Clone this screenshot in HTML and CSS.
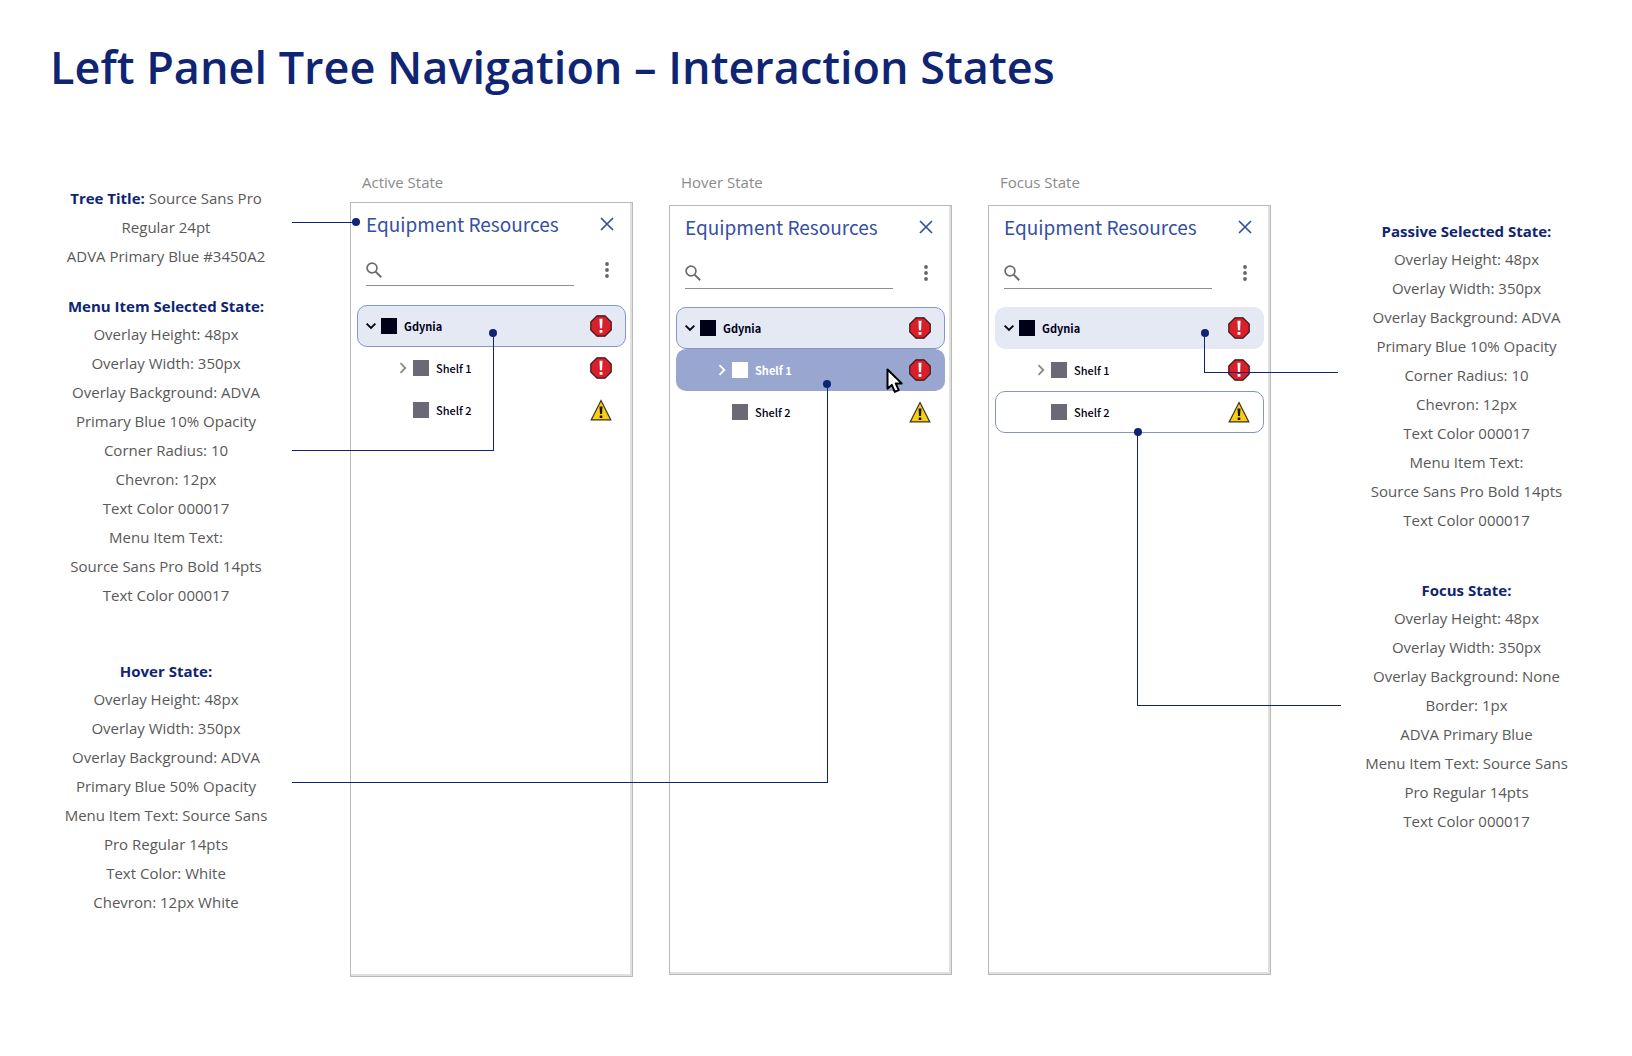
FILE: index.html
```html
<!DOCTYPE html>
<html lang="en">
<head>
<meta charset="utf-8">
<title>Left Panel Tree Navigation – Interaction States</title>
<link rel="stylesheet" href="styles.css">
</head>
<body>
<svg class="symbols" aria-hidden="true">
  <symbol id="close" viewBox="0 0 14 14"><path d="M1 1l12 12M13 1L1 13" fill="none" stroke="currentColor" stroke-width="1.7"/></symbol>
  <symbol id="search" viewBox="0 0 16 16"><circle cx="6" cy="6" r="4.9" fill="none" stroke="currentColor" stroke-width="1.7"/><path d="M9.6 9.6l5.6 5.6" stroke="currentColor" stroke-width="2"/></symbol>
  <symbol id="more" viewBox="0 0 4 16"><g fill="currentColor"><circle cx="2" cy="2" r="1.9"/><circle cx="2" cy="8" r="1.9"/><circle cx="2" cy="14" r="1.9"/></g></symbol>
  <symbol id="down" viewBox="0 0 10 12"><path d="M.6 3.600L5 8l4.400-4.400" fill="none" stroke="currentColor" stroke-width="1.9"/></symbol>
  <symbol id="right" viewBox="0 0 10 12"><path d="M2.500 1.200L7.300 6l-4.800 4.800" fill="none" stroke="currentColor" stroke-width="1.800"/></symbol>
  <symbol id="critical" viewBox="0 0 22 22"><path d="M7 .8h8L21.200 7v8L15 21.200H7L.8 15V7z" fill="#d9202a" stroke="#3a1518" stroke-width="1.200"/><path d="M9.500 3.800h3l-.4 9.400H9.900zM9.600 15h2.800v2.800H9.600z" fill="#fff"/></symbol>
  <symbol id="warning" viewBox="0 0 22 22"><path d="M11 1.500L20.800 20.900H1.200z" fill="#f8cd14" stroke="#39351f" stroke-width="1.200"/><path d="M9.500 7.500h3l-.5 7.500h-2zM9.700 16.500h2.600V19H9.700z" fill="#151515"/></symbol>
</svg>

<h1 class="title">Left Panel Tree Navigation – Interaction States</h1>

<main class="board">
  <div class="notes notes-left">
    <section class="note">
      <p><strong>Tree Title:</strong> Source Sans Pro</p>
      <p>Regular 24pt</p>
      <p>ADVA Primary Blue #3450A2</p>
    </section>
    <section class="note">
      <h2>Menu Item Selected State:</h2>
      <p>Overlay Height: 48px</p>
      <p>Overlay Width: 350px</p>
      <p>Overlay Background: ADVA</p>
      <p>Primary Blue 10% Opacity</p>
      <p>Corner Radius: 10</p>
      <p>Chevron: 12px</p>
      <p>Text Color 000017</p>
      <p>Menu Item Text:</p>
      <p>Source Sans Pro Bold 14pts</p>
      <p>Text Color 000017</p>
    </section>
    <section class="note note-spaced">
      <h2>Hover State:</h2>
      <p>Overlay Height: 48px</p>
      <p>Overlay Width: 350px</p>
      <p>Overlay Background: ADVA</p>
      <p>Primary Blue 50% Opacity</p>
      <p>Menu Item Text: Source Sans</p>
      <p>Pro Regular 14pts</p>
      <p>Text Color: White</p>
      <p>Chevron: 12px White</p>
    </section>
  </div>

  <div class="states">
    <section class="state">
      <h2 class="state-name">Active State</h2>
      <div class="panel panel-active">
        <header class="panel-head">
          <h3>Equipment Resources</h3>
          <button class="icon-button close" aria-label="Close"><svg width="14" height="14"><use href="#close"/></svg></button>
        </header>
        <div class="tools">
          <label class="search"><svg width="16" height="16"><use href="#search"/></svg><input type="search" aria-label="Search resources"></label>
          <button class="icon-button more" aria-label="More options"><svg width="4" height="16"><use href="#more"/></svg></button>
        </div>
        <ul class="tree">
          <li><button class="item root selected outlined"><svg class="chevron" width="10" height="12"><use href="#down"/></svg><span class="node"></span><span class="name">Gdynia</span><svg width="22" height="22"><use href="#critical"/></svg></button></li>
          <li><button class="item child"><svg class="chevron" width="10" height="12"><use href="#right"/></svg><span class="node"></span><span class="name">Shelf 1</span><svg width="22" height="22"><use href="#critical"/></svg></button></li>
          <li><button class="item child"><span class="chevron"></span><span class="node"></span><span class="name">Shelf 2</span><svg width="22" height="22"><use href="#warning"/></svg></button></li>
        </ul>
        <span class="leader leader-title"></span>
        <span class="leader leader-selected"></span>
      </div>
    </section>

    <section class="state">
      <h2 class="state-name">Hover State</h2>
      <div class="panel">
        <header class="panel-head">
          <h3>Equipment Resources</h3>
          <button class="icon-button close" aria-label="Close"><svg width="14" height="14"><use href="#close"/></svg></button>
        </header>
        <div class="tools">
          <label class="search"><svg width="16" height="16"><use href="#search"/></svg><input type="search" aria-label="Search resources"></label>
          <button class="icon-button more" aria-label="More options"><svg width="4" height="16"><use href="#more"/></svg></button>
        </div>
        <ul class="tree">
          <li><button class="item root selected outlined"><svg class="chevron" width="10" height="12"><use href="#down"/></svg><span class="node"></span><span class="name">Gdynia</span><svg width="22" height="22"><use href="#critical"/></svg></button></li>
          <li><button class="item child hovered"><svg class="chevron" width="10" height="12"><use href="#right"/></svg><span class="node"></span><span class="name">Shelf 1</span><svg width="22" height="22"><use href="#critical"/></svg></button></li>
          <li><button class="item child"><span class="chevron"></span><span class="node"></span><span class="name">Shelf 2</span><svg width="22" height="22"><use href="#warning"/></svg></button></li>
        </ul>
        <svg class="pointer" width="18" height="26" viewBox="0 0 18 26" aria-hidden="true"><path d="M1.500 1.500v19.300l4.300-3.900 3 7 3.900-1.700-3-6.800h6z" fill="#fff" stroke="#000" stroke-width="2" stroke-linejoin="round"/></svg>
        <span class="leader leader-hover"></span>
      </div>
    </section>

    <section class="state">
      <h2 class="state-name">Focus State</h2>
      <div class="panel">
        <header class="panel-head">
          <h3>Equipment Resources</h3>
          <button class="icon-button close" aria-label="Close"><svg width="14" height="14"><use href="#close"/></svg></button>
        </header>
        <div class="tools">
          <label class="search"><svg width="16" height="16"><use href="#search"/></svg><input type="search" aria-label="Search resources"></label>
          <button class="icon-button more" aria-label="More options"><svg width="4" height="16"><use href="#more"/></svg></button>
        </div>
        <ul class="tree">
          <li><button class="item root selected"><svg class="chevron" width="10" height="12"><use href="#down"/></svg><span class="node"></span><span class="name">Gdynia</span><svg width="22" height="22"><use href="#critical"/></svg></button></li>
          <li><button class="item child"><svg class="chevron" width="10" height="12"><use href="#right"/></svg><span class="node"></span><span class="name">Shelf 1</span><svg width="22" height="22"><use href="#critical"/></svg></button></li>
          <li><button class="item child outlined"><span class="chevron"></span><span class="node"></span><span class="name">Shelf 2</span><svg width="22" height="22"><use href="#warning"/></svg></button></li>
        </ul>
        <span class="leader leader-passive"></span>
        <span class="leader leader-focus"></span>
      </div>
    </section>
  </div>

  <div class="notes notes-right">
    <section class="note">
      <h2>Passive Selected State:</h2>
      <p>Overlay Height: 48px</p>
      <p>Overlay Width: 350px</p>
      <p>Overlay Background: ADVA</p>
      <p>Primary Blue 10% Opacity</p>
      <p>Corner Radius: 10</p>
      <p>Chevron: 12px</p>
      <p>Text Color 000017</p>
      <p>Menu Item Text:</p>
      <p>Source Sans Pro Bold 14pts</p>
      <p>Text Color 000017</p>
    </section>
    <section class="note note-spaced">
      <h2>Focus State:</h2>
      <p>Overlay Height: 48px</p>
      <p>Overlay Width: 350px</p>
      <p>Overlay Background: None</p>
      <p>Border: 1px</p>
      <p>ADVA Primary Blue</p>
      <p>Menu Item Text: Source Sans</p>
      <p>Pro Regular 14pts</p>
      <p>Text Color 000017</p>
    </section>
  </div>
</main>
</body>
</html>
```

FILE: styles.css
```css
* { box-sizing: border-box; }

body {
  margin: 0;
  background: #fff;
  color: #595959;
  font-family: "Open Sans", "Noto Sans", sans-serif;
  font-size: 15px;
}

h1, h2, h3, p, ul { margin: 0; padding: 0; }
button, input { font: inherit; color: inherit; }
svg { display: block; flex: none; }

.symbols { position: absolute; width: 0; height: 0; }

.title {
  padding: 34px 50px 0;
  color: #0f2573;
  font-size: 45px;
  font-weight: 600;
  line-height: 66px;
}

.board {
  display: grid;
  grid-template-columns: minmax(240px, 1fr) auto minmax(240px, 1fr);
  padding: 70px 11px 64px 0;
}

/* Specification notes */
.notes {
  display: flex;
  flex-direction: column;
  gap: 21px;
  text-align: center;
  line-height: 29px;
  white-space: nowrap;
}
.notes-left { padding: 14px 18px 0 0; }
.notes-right { padding: 47px 0 0 41px; }
.note h2, .note strong { color: #0f2573; font-size: 15px; font-weight: 700; }
.note h2 { line-height: 28px; }
.note-spaced { padding-top: 20px; }
.notes-left .note-spaced { padding-top: 26px; }

/* Panels */
.states {
  display: grid;
  grid-template-columns: repeat(3, 283px);
  gap: 36px;
}
.state-name {
  padding-left: 12px;
  color: #8a8a8a;
  font-size: 15px;
  font-weight: 400;
  line-height: 24px;
}
.panel {
  position: relative;
  min-height: 770px;
  margin-top: 11px;
  padding: 0 6px;
  border: 1px solid #b9b9b9;
  box-shadow: inset -2px -2px 0 #e0e0e0;
  font-family: "Noto Sans CJK SC", "Noto Sans", sans-serif;
}
.panel-active { min-height: 775px; margin-top: 8px; }

.panel-head {
  display: flex;
  align-items: center;
  justify-content: space-between;
  height: 42px;
  padding: 0 4px 0 9px;
}
.panel-head h3 {
  color: #3450a2;
  font-size: 19px;
  font-weight: 400;
  line-height: 28px;
}
.icon-button {
  display: grid;
  place-items: center;
  width: 30px;
  height: 30px;
  padding: 0;
  border: 0;
  background: none;
}
.close { color: #3450a2; }
.more { color: #666; }

.tools {
  display: flex;
  align-items: center;
  justify-content: space-between;
  height: 41px;
  padding: 0 4px 0 9px;
}
.search {
  display: flex;
  align-items: center;
  width: 208px;
  height: 32px;
  margin-top: 9px;
  border-bottom: 1px solid #8f8f8f;
  color: #6b6b6b;
}
.search input {
  flex: 1;
  min-width: 0;
  height: 24px;
  padding: 0 6px;
  border: 0;
  outline: 0;
  background: none;
}
.tools .more { margin-top: 9px; }

.tree { margin-top: 18px; list-style: none; }
.panel-active .tree { margin-top: 19px; }
.item {
  display: flex;
  align-items: center;
  width: 100%;
  height: 42px;
  padding: 0 13px 0 8px;
  border: 1px solid transparent;
  border-radius: 10px;
  background: none;
  color: #000017;
  font-size: 11px;
  line-height: 16px;
  text-align: left;
}
.root { font-weight: 700; }
.child { padding-left: 40px; font-weight: 500; }
.chevron { width: 10px; margin-right: 5px; }
.child .chevron { color: #8a8a8a; }
.node { width: 16px; height: 16px; margin-right: 7px; background: #6b6976; }
.root .node { background: #000017; }
.name { flex: 1; }
.selected { background: #e5e9f4; }
.outlined { border-color: #8496c8; }
.hovered { background: #99a7d0; color: #fff; font-weight: 700; }
.hovered .chevron { color: #fff; }
.hovered .node { background: #fff; }

.pointer { position: absolute; left: 216px; top: 162px; }

/* Leader lines tie each note to the part it describes */
.leader {
  position: absolute;
  z-index: 1;
  border: 0 solid #0f2573;
  pointer-events: none;
}
.leader::after {
  content: "";
  position: absolute;
  width: 8px;
  height: 8px;
  border-radius: 50%;
  background: #0f2573;
}
.leader-title { left: -59px; top: 19px; width: 64px; border-top-width: 1px; }
.leader-title::after { right: -4px; top: -5px; }
.leader-selected { left: -59px; top: 130px; width: 202px; height: 118px; border-width: 0 1px 1px 0; }
.leader-hover { left: -378px; top: 178px; width: 536px; height: 399px; border-width: 0 1px 1px 0; }
.leader-selected::after, .leader-hover::after { right: -4px; top: -4px; }
.leader-passive { left: 215px; top: 127px; width: 134px; height: 40px; border-width: 0 0 1px 1px; }
.leader-focus { left: 148px; top: 226px; width: 204px; height: 274px; border-width: 0 0 1px 1px; }
.leader-passive::after, .leader-focus::after { left: -4px; top: -4px; }
```
